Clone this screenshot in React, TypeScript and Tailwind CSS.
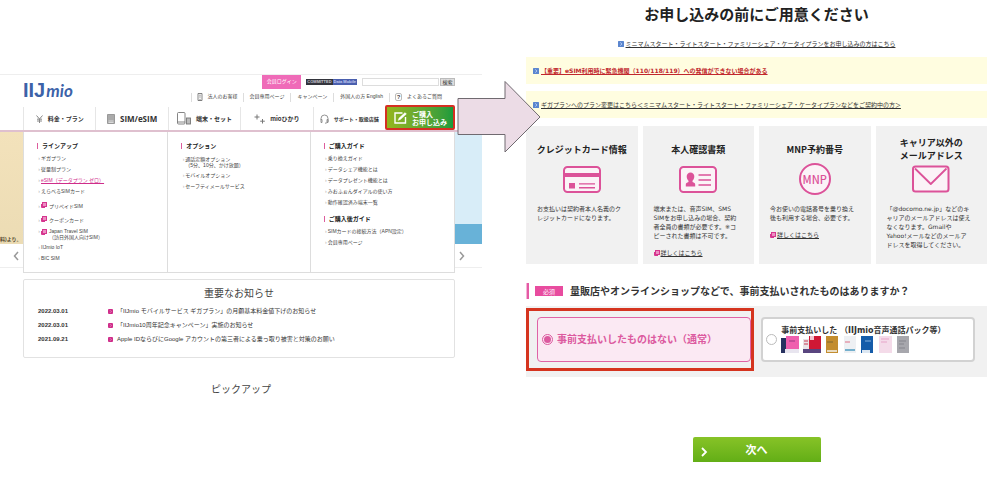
import type { ReactNode } from "react";

interface MenuItem {
  label: string;
  sub?: string;
  external?: boolean;
  active?: boolean;
}

interface Card {
  title: string[];
  lines: string[];
  link?: boolean;
  icon: ReactNode;
}

const lineup: MenuItem[] = [
  { label: "ギガプラン" },
  { label: "従量制プラン" },
  { label: "eSIM（データプラン ゼロ）", active: true },
  { label: "えらべるSIMカード" },
  { label: "プリペイドSIM", external: true },
  { label: "クーポンカード", external: true },
  { label: "Japan Travel SIM", sub: "（訪日外国人向けSIM）", external: true },
  { label: "IIJmio IoT" },
  { label: "BIC SIM" },
];

const options: MenuItem[] = [
  { label: "通話定額オプション", sub: "（5分、10分、かけ放題）" },
  { label: "モバイルオプション" },
  { label: "セーフティメールサービス" },
];

const guide: MenuItem[] = [
  { label: "乗り換えガイド" },
  { label: "データシェア機能とは" },
  { label: "データプレゼント機能とは" },
  { label: "みおふぉんダイアルの使い方" },
  { label: "動作確認済み端末一覧" },
];

const afterGuide: MenuItem[] = [
  { label: "SIMカードの接続方法（APN設定）" },
  { label: "会員専用ページ" },
];

const news = [
  { date: "2022.03.01", text: "「IIJmio モバイルサービス ギガプラン」の月額基本料金値下げのお知らせ" },
  { date: "2022.03.01", text: "「IIJmio10周年記念キャンペーン」実施のお知らせ" },
  { date: "2021.09.21", text: "Apple IDならびにGoogle アカウントの第三者による乗っ取り被害と対策のお願い" },
];

const ExternalIcon = () => (
  <svg width="6" height="6" viewBox="0 0 6 6" className="shrink-0">
    <rect x="1.5" y="0.5" width="4" height="4" fill="#ec8fc2" stroke="#d6368f" />
    <path d="M0.5 2v3.5h3.5" fill="none" stroke="#d6368f" />
  </svg>
);

const BlueMark = () => (
  <svg width="6" height="6" viewBox="0 0 6 6" className="shrink-0">
    <rect width="6" height="6" rx="0.5" fill="#5b86cf" />
    <path d="M2.2 1.4 4 3 2.2 4.6" fill="none" stroke="#b9cdf0" strokeWidth="0.9" />
  </svg>
);

const CreditCardIcon = () => (
  <svg width="38" height="28" viewBox="0 0 38 28">
    <rect x="1" y="2" width="36" height="25" rx="3.5" fill="#fbf3f7" stroke="#dc5299" strokeWidth="2" />
    <path d="M1 8h36v4H1z" fill="#dc5299" />
    <path d="M6 18h6v5.5H6zM16 18.200h16v1.400H16zM16 22h16v1.400H16z" fill="#dc5299" />
  </svg>
);

const IdCardIcon = () => (
  <svg width="38" height="28" viewBox="0 0 38 28">
    <rect x="1" y="2" width="36" height="25" rx="3.5" fill="#fbf3f7" stroke="#dc5299" strokeWidth="2" />
    <path
      d="M11.500 7.500a3.800 3.800 0 0 1 3.800 4c0 2-.9 3.300-1.800 4.200v1.300c1.600.5 2.700 1 2.700 2.600v1.900H6.800v-1.900c0-1.600 1.100-2.100 2.700-2.600v-1.300c-.9-.9-1.800-2.200-1.800-4.200a3.800 3.800 0 0 1 3.800-4z"
      fill="#dc5299"
    />
    <path d="M19.500 10h12.500M19.500 15h12.500M19.500 20h12.500" stroke="#dc5299" strokeWidth="1.600" />
  </svg>
);

const MnpIcon = () => (
  <div className="flex size-8 items-center justify-center rounded-full border-2 border-[#dc5299] bg-[#fbf3f7] text-[11px] font-medium text-[#dc5299]">
    MNP
  </div>
);

const MailIcon = () => (
  <svg width="38" height="28" viewBox="0 0 38 28">
    <rect x="1" y="1.500" width="35.500" height="25" rx="2.500" fill="#fbf3f7" stroke="#dc5299" strokeWidth="2" />
    <path d="M3 3.500 18.800 19 34.500 3.500" fill="none" stroke="#dc5299" strokeWidth="1.800" strokeLinejoin="round" />
  </svg>
);

const cards: Card[] = [
  {
    title: ["クレジットカード情報"],
    icon: <CreditCardIcon />,
    lines: ["お支払いは契約者本人名義のク", "レジットカードになります。"],
  },
  {
    title: ["本人確認書類"],
    icon: <IdCardIcon />,
    lines: ["端末または、音声SIM、SMS", "SIMをお申し込みの場合、契約", "者全員の書類が必要です。※コ", "ピーされた書類は不可です。"],
    link: true,
  },
  {
    title: ["MNP予約番号"],
    icon: <MnpIcon />,
    lines: ["今お使いの電話番号を乗り換え", "後も利用する場合、必要です。"],
    link: true,
  },
  {
    title: ["キャリア以外の", "メールアドレス"],
    icon: <MailIcon />,
    lines: [
      "「@docomo.ne.jp」などのキ",
      "ャリアのメールアドレスは使え",
      "なくなります。Gmailや",
      "Yahoo!メールなどのメールア",
      "ドレスを取得してください。",
    ],
  },
];

const MenuGroup = ({ title, items }: { title: string; items: MenuItem[] }) => (
  <div>
    <h3 className="border-l border-[#dd5c9c] pl-1 text-[6px] leading-[6px] font-bold text-[#222]">{title}</h3>
    <ul className="pt-1 text-[5px]">
      {items.map((item) => (
        <li
          key={item.label}
          className={
            item.sub
              ? "flex gap-px pt-[3px] pb-[2px] leading-[6px]"
              : item.external
                ? "flex gap-px pt-1 leading-[10px]"
                : "flex gap-px leading-[11px]"
          }
        >
          <span className="w-[3px] text-right text-[#aaa]">›</span>
          <a href="#" className={item.active ? "text-[#cf2d8a] underline" : "flex gap-px text-[#444]"}>
            {item.external && (
              <span className="mr-px flex h-2 items-center">
                <ExternalIcon />
              </span>
            )}
            <span>
              {item.label}
              {item.sub && <span className="block">{item.sub}</span>}
            </span>
          </a>
        </li>
      ))}
    </ul>
  </div>
);

const SiteHeader = () => (
  <header className="border-t border-[#eee] pr-[27px] pl-[23px]">
    <div className="flex h-[30px] justify-between">
      <a href="#" aria-label="IIJmio" className="flex items-baseline gap-px pt-[5px] leading-5 text-[#3c62a8]">
        <span className="font-['Liberation_Sans',sans-serif] text-[20px] font-bold">IIJ</span>
        <span className="font-['Lato',sans-serif] text-[17px] font-bold italic">mio</span>
      </a>
      <div className="flex flex-col items-end justify-between">
        <div className="flex items-center gap-[5px]">
          <a href="#" className="flex h-[14px] w-[39px] items-center justify-center bg-[#ef6bb8] text-[5px] text-white">
            会員ログイン
          </a>
          <span className="flex h-[6px] items-center bg-[#33343c] text-[4px] leading-[6px] font-bold text-[#c8c8d0]">
            <span className="px-px">COMMITTED</span>
            <span className="bg-[#4a5fae] px-px text-[#c3cdf2]">Data Mobile</span>
          </span>
          <form className="flex h-2 gap-px">
            <input aria-label="サイト内検索" className="w-[77px] border border-[#ddd] bg-white text-[5px]" />
            <button type="button" className="w-[15px] border border-[#bbb] bg-[#ddd] text-[5px] leading-[6px] text-[#333]">
              検索
            </button>
          </form>
        </div>
        <nav className="mb-[2px] flex h-3 items-center text-[5px] text-[#444] [&>a]:flex [&>a]:h-[9px] [&>a]:items-center [&>a]:border-l [&>a]:border-[#ddd]">
          <a href="#" className="gap-[5px] px-[5px]">
            <svg width="6" height="8" viewBox="0 0 6 8" fill="none" stroke="#666" strokeWidth="0.8">
              <path d="M1 .5h4v7H1zM2.300 2.200h1.400M2.300 4h1.400M3 5.800v1.700" />
            </svg>
            法人のお客様
          </a>
          <a href="#" className="px-[6px]">会員専用ページ</a>
          <a href="#" className="px-[6px]">キャンペーン</a>
          <a href="#" className="px-[6px]">外国人の方 English</a>
          <a href="#" className="gap-[5px] pr-[13px] pl-[5px]">
            <span className="flex h-2 w-[7px] items-center justify-center rounded-xs border border-[#bbb] text-[6px] font-bold">?</span>
            よくあるご質問
          </a>
        </nav>
      </div>
    </div>
    <nav className="flex h-[25px] items-stretch font-['Noto_Sans_CJK_JP',sans-serif] text-[6px] font-bold text-[#333] [&>a]:mt-[2px] [&>a]:flex [&>a]:items-center [&>a]:justify-center [&>a]:gap-[5px] [&>a]:border-l [&>a]:border-[#e6e6e6]">
      <a href="#" className="flex-1">
        <svg width="7" height="8" viewBox="0 0 7 8" fill="none" stroke="#888" strokeWidth="1">
          <path d="M.5.500 3.500 4 6.500.500M3.500 4v4M1 4.200h5M1 6h5" />
        </svg>
        料金・プラン
      </a>
      <a href="#" className="flex-1 font-['Open_Sans',sans-serif] text-[8px]">
        <svg width="8" height="10" viewBox="0 0 8 10">
          <path d="M.5.500h7v9h-7z" fill="#aaa" stroke="#999" />
          <path d="M1.500 7h5M1.500 8.500h5" stroke="#eee" strokeWidth="0.700" />
        </svg>
        SIM/eSIM
      </a>
      <a href="#" className="flex-1">
        <svg width="14" height="13" viewBox="0 0 14 13" fill="none" stroke="#777" strokeWidth="0.900">
          <rect x="0.500" y="0.500" width="7.500" height="11.500" rx="1" />
          <path d="M.5 10h7.500" />
          <rect x="9.500" y="6" width="4" height="6" fill="#bbb" />
        </svg>
        端末・セット
      </a>
      <a href="#" className="flex-1">
        <svg width="11" height="10" viewBox="0 0 11 10" stroke="#777" strokeWidth="1">
          <path d="M3 .5v5M.5 3h5M8.500 5v4.500M6.200 7.200h4.600" />
        </svg>
        mioひかり
      </a>
      <a href="#" className="flex-1 text-[5px]">
        <svg width="9" height="10" viewBox="0 0 9 10" fill="none" stroke="#888" strokeWidth="0.900">
          <path d="M1 6V4.500a3.500 3.500 0 0 1 7 0V7c0 1.500-1 2-3 2.200M1 5.500v3h1v-3zM8 5.500v3H7v-3z" />
        </svg>
        サポート・取扱店舗
      </a>
      <button
        type="button"
        className="flex w-[70px] shrink-0 items-center gap-[5px] rounded-xs border-2 border-[#d53022] bg-linear-to-r from-[#93b51c] to-[#189b3c] pl-[7px] text-left text-[7px] leading-2 font-bold text-white"
      >
        <svg width="13" height="12" viewBox="0 0 13 12" fill="none" stroke="white" strokeWidth="1.400">
          <path d="M8.500 1H1v10h10.500V5" />
          <path d="M4 8.500 5 6l6-5.500L12.500 2l-6 5.500z" fill="white" strokeWidth="0.300" />
        </svg>
        <span>
          ご購入
          <br />
          お申し込み
        </span>
      </button>
    </nav>
  </header>
);

const BlockArrow = () => (
  <svg width="84" height="74" viewBox="0 0 84 74" className="absolute top-[80px] -right-[59px] z-10">
    <path d="M1 18.500h47v-17L83 37 48 72v-17.500H1z" fill="#ecdce6" stroke="#706a70" strokeWidth="1" />
  </svg>
);

const ProductThumbs = () => (
  <svg width="128" height="18" viewBox="0 0 128 18">
    <path d="M0 2h5v15H0z" fill="#27315f" />
    <path d="M5 0h13v13H5z" fill="#ef5fae" />
    <path d="M4 13h14v4H4z" fill="#e8e5ef" />
    <path d="M8 5h6" stroke="#9d3b83" />
    <path d="M22 3h6v10h-6z" fill="#e9e2e6" />
    <path d="M23 5h4M23 8h4" stroke="#c83b52" />
    <path d="M28 0h12v13H28z" fill="#cf1835" />
    <path d="M29 0h4v4h-4z" fill="#f3c4cf" />
    <path d="M22 13h18v4H22z" fill="#59457f" />
    <path d="M45 0h12v17H45z" fill="#c38d2f" />
    <path d="M46 6h6" stroke="#7d6730" />
    <path d="M46 14h10v2H46z" fill="#e9dcc2" />
    <path d="M63 0h12v17H63z" fill="#eef0f3" />
    <path d="M64 6h5" stroke="#df7187" />
    <path d="M64 14h10" stroke="#4d9bc0" strokeWidth="1.500" />
    <path d="M80 0h12v17H80z" fill="#155ca9" />
    <path d="M84 5h6" stroke="#86b2de" />
    <path d="M81 14h8v3h-8z" fill="#dce7f2" />
    <path d="M98 0h13v17H98z" fill="#f4dbe9" />
    <path d="M100 3h8M100 6h6" stroke="#e7a5c9" />
    <path d="M116 0h12v17h-12z" fill="#a7a7ad" />
    <path d="M118 5h7M118 8h5M118 12h6" stroke="#85858d" />
  </svg>
);

const MioSite = () => (
  <section className="relative pt-[74px] font-['Liberation_Sans','Noto_Sans_CJK_JP',sans-serif]">
    <SiteHeader />
    <BlockArrow />
    <div className="h-[2px] bg-[#dfc0cf]" />

    <div className="flex">
      <div className="flex w-[23px] shrink-0 flex-col">
        <div className="flex h-[112px] items-end bg-linear-to-b from-[#f3e2bb] to-[#ecdcb4] pb-px text-[5px] leading-2 font-bold text-[#54482f]">
          料)より。
        </div>
        <div className="flex h-6 items-center justify-center border-b border-[#eee] pl-2">
          <svg width="6" height="10" viewBox="0 0 6 10" fill="none" stroke="#999" strokeWidth="1.500">
            <path d="M5 1 1.500 5 5 9" />
          </svg>
        </div>
      </div>

      <div className="grid flex-1 grid-cols-3 border border-t-0 border-[#ddd] bg-white">
        <div className="pt-[11px] pb-2 pl-[13px]">
          <MenuGroup title="ラインアップ" items={lineup} />
        </div>
        <div className="border-x border-[#ddd] pt-[11px] pl-[13px]">
          <MenuGroup title="オプション" items={options} />
        </div>
        <div className="flex flex-col gap-2 pt-[11px] pl-[13px]">
          <MenuGroup title="ご購入ガイド" items={guide} />
          <MenuGroup title="ご購入後ガイド" items={afterGuide} />
        </div>
      </div>

      <div className="flex w-[27px] shrink-0 flex-col">
        <div className="h-[92px] bg-[#d8edf8]" />
        <div className="h-5 bg-[#68b2d8]" />
        <div className="flex h-6 items-center border-b border-[#eee] pl-1">
          <svg width="6" height="10" viewBox="0 0 6 10" fill="none" stroke="#999" strokeWidth="1.500">
            <path d="M1 1 4.500 5 1 9" />
          </svg>
        </div>
      </div>
    </div>

    <div className="mt-[6px] mr-[27px] ml-[23px] rounded-xs border border-[#e2e2e2] px-[14px] pt-2 pb-[11px]">
      <h2 className="text-center text-[10px] leading-3 text-[#444]">重要なお知らせ</h2>
      <ul className="pt-1 text-[6px] text-[#333]">
        {news.map((item) => (
          <li key={item.text} className="flex items-center leading-[14px]">
            <time className="w-[70px] font-bold">{item.date}</time>
            <svg width="5" height="5" viewBox="0 0 5 5" className="mr-1">
              <rect width="5" height="5" rx="1" fill="#cf2d8a" />
              <path d="M2 1.200 3.300 2.500 2 3.800" fill="none" stroke="#f7cfe4" strokeWidth="0.500" />
            </svg>
            <a href="#">{item.text}</a>
          </li>
        ))}
      </ul>
    </div>
    <h2 className="mt-6 text-center text-[10px] leading-4 text-[#444]">ピックアップ</h2>
  </section>
);

const ApplyPage = () => (
  <section className="pt-[3px] pr-[13px] pl-11 font-['DejaVu_Sans','Noto_Sans_CJK_JP',sans-serif] text-[#333]">
    <h1 className="text-center text-[15px] leading-6 font-bold text-[#222]">お申し込みの前にご用意ください</h1>
    <p className="mt-[9px] flex items-center justify-center gap-[2px] text-[6px] leading-4">
      <BlueMark />
      <a href="#" className="underline">
        ミニマムスタート・ライトスタート・ファミリーシェア・ケータイプランをお申し込みの方はこちら
      </a>
    </p>
    <p className="mt-[5px] flex h-[27px] items-center gap-[2px] bg-[#fffde0] pl-[7px] text-[6px]">
      <BlueMark />
      <a href="#" className="font-bold text-[#c1272d] underline">
        【重要】eSIM利用時に緊急機関（110/118/119）への発信ができない場合がある
      </a>
    </p>
    <p className="mt-[7px] flex h-[27px] items-center gap-[2px] bg-[#fffde0] pl-[7px] text-[6px]">
      <BlueMark />
      <a href="#" className="underline">
        ギガプランへのプラン変更はこちら＜ミニマムスタート・ライトスタート・ファミリーシェア・ケータイプランなどをご契約中の方＞
      </a>
    </p>

    <div className="mt-2 grid grid-cols-4 gap-[5px]">
      {cards.map((card) => (
        <div key={card.title[0]} className="min-h-[138px] bg-[#f1f1f1] px-[11px] pt-[10px]">
          <h2 className="flex h-[26px] flex-col items-center justify-center font-['Noto_Sans_CJK_JP',sans-serif] text-[9px] leading-[13px] font-bold text-[#222]">
            {card.title.map((t) => (
              <span key={t}>{t}</span>
            ))}
          </h2>
          <div className="flex h-[34px] items-center justify-center font-['Noto_Sans_CJK_JP',sans-serif]">{card.icon}</div>
          <p className="mt-2 text-[6px] leading-[9px]">
            {card.lines.map((line) => (
              <span key={line} className="block">
                {line}
              </span>
            ))}
          </p>
          {card.link && (
            <p className="mt-2 flex items-center gap-px text-[6px] leading-[10px]">
              <ExternalIcon />
              <a href="#" className="underline">詳しくはこちら</a>
            </p>
          )}
        </div>
      ))}
    </div>

    <div className="mt-[19px] flex h-4 items-center">
      <span className="h-full w-[3px] border-l border-[#f4b4d7] bg-[#e55aa5]" />
      <span className="ml-[6px] flex h-[10px] w-[28px] items-center justify-center bg-[#e84c9f] text-[6px] text-white">必須</span>
      <h2 id="prepaid" className="ml-[7px] text-[10px] font-bold">
        量販店やオンラインショップなどで、事前支払いされたものはありますか？
      </h2>
    </div>

    <div role="radiogroup" aria-labelledby="prepaid" className="mt-[7px] flex bg-[#f1f1f1] pt-[2px] pb-[6px]">
      <div className="flex w-[49.5%] border-3 border-[#d5341f] py-[6px] pl-2">
        <label className="flex h-[45px] flex-1 items-center gap-1 rounded-sm border border-[#df64a6] bg-[#fbe9f3] pl-1 text-[10px] font-bold text-[#dc5a9f]">
          <input
            type="radio"
            name="prepaid"
            defaultChecked
            className="size-[11px] appearance-none rounded-full border border-[#dc5a9f] bg-white checked:bg-[#dc5a9f] checked:bg-clip-content checked:p-px"
          />
          事前支払いしたものはない（通常）
        </label>
      </div>
      <div className="flex flex-1 py-[9px] pr-3 pl-[7px]">
        <label className="flex h-[45px] flex-1 items-center gap-1 rounded-sm border-2 border-[#d2d2d2] bg-white pl-[3px] text-[8px] leading-[10px] font-bold">
          <input
            type="radio"
            name="prepaid"
            className="size-[11px] appearance-none rounded-full border border-[#bbb] bg-white checked:bg-[#dc5a9f] checked:bg-clip-content checked:p-px"
          />
          <span className="flex flex-col">
            事前支払いした （IIJmio音声通話パック等）
            <ProductThumbs />
          </span>
        </label>
      </div>
    </div>

    <button
      type="button"
      className="relative mx-auto mt-[60px] flex h-[25px] w-32 items-center justify-center rounded-t-xs bg-linear-to-b from-[#87c327] to-[#62ae16] pt-1 text-[11px] font-bold text-white"
    >
      <svg width="7" height="10" viewBox="0 0 7 10" fill="none" stroke="white" strokeWidth="1.800" className="absolute top-[10px] left-2">
        <path d="M1 1 5 5 1 9" />
      </svg>
      次へ
    </button>
  </section>
);

export default function App() {
  return (
    <main lang="ja" className="grid min-h-screen grid-cols-[48.2%_1fr] overflow-hidden bg-white whitespace-nowrap">
      <MioSite />
      <ApplyPage />
    </main>
  );
}
